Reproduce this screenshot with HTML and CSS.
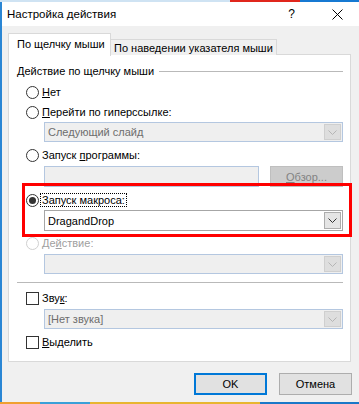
FILE: index.html
```html
<!DOCTYPE html>
<html lang="ru">
<head>
    <meta charset="UTF-8">
    <title>Настройка действия</title>
    <link rel="stylesheet" href="styles.css">
</head>
<body>
    <div class="dialog">
        <header class="titlebar">
            <span class="title">Настройка действия</span>
            <span class="help">?</span>
            <svg class="close" width="11" height="11" viewBox="0 0 11 11">
                <path d="M0.5 0.5 L10.5 10.5 M10.5 0.5 L0.5 10.5" stroke="#000" stroke-width="1"/>
            </svg>
        </header>

        <div class="dialog-body">
            <div class="tabs">
                <div class="tab tab-active">По щелчку мыши</div>
                <div class="tab">По наведении указателя мыши</div>
            </div>

            <div class="panel">
                <div class="group-title">
                    <span>Действие по щелчку мыши</span>
                    <span class="group-line"></span>
                </div>

                <label class="option gap-5"><span class="radio"></span><span><u>Н</u>ет</span></label>
                <label class="option gap-4"><span class="radio"></span><span><u>П</u>ерейти по гиперссылке:</span></label>
                <div class="select select-disabled gap-2">
                    <span class="select-text">Следующий слайд</span>
                    <span class="select-arrow"><svg width="9" height="5" viewBox="0 0 9 5"><path d="M0.5 0.5 L4.5 4.5 L8.5 0.5" fill="none" stroke="#b5b5b5"/></svg></span>
                </div>

                <label class="option gap-5"><span class="radio"></span><span>Запуск <u>п</u>рограммы:</span></label>
                <div class="program-row gap-3">
                    <div class="input-disabled"></div>
                    <button class="btn-browse" disabled><u>О</u>бзор...</button>
                </div>

                <label class="option gap-5"><span class="radio radio-checked"></span><span class="focus">Запуск макроса:</span></label>
                <div class="select gap-2">
                    <span class="select-text">DragandDrop</span>
                    <span class="select-arrow"><svg width="9" height="5" viewBox="0 0 9 5"><path d="M0.5 0.5 L4.5 4.5 L8.5 0.5" fill="none" stroke="#333"/></svg></span>
                </div>

                <label class="option option-disabled gap-4"><span class="radio"></span><span>Де<u>й</u>ствие:</span></label>
                <div class="select select-disabled gap-3">
                    <span class="select-text"></span>
                    <span class="select-arrow"><svg width="9" height="5" viewBox="0 0 9 5"><path d="M0.5 0.5 L4.5 4.5 L8.5 0.5" fill="none" stroke="#b5b5b5"/></svg></span>
                </div>

                <div class="separator"></div>

                <label class="option gap-7"><span class="checkbox"></span><span>Зву<u>к</u>:</span></label>
                <div class="select select-disabled gap-3">
                    <span class="select-text">[Нет звука]</span>
                    <span class="select-arrow"><svg width="9" height="5" viewBox="0 0 9 5"><path d="M0.5 0.5 L4.5 4.5 L8.5 0.5" fill="none" stroke="#b5b5b5"/></svg></span>
                </div>
                <label class="option gap-5"><span class="checkbox"></span><span><u>В</u>ыделить</span></label>

                <!-- рамка выделения поверх панели -->
                <div class="highlight"></div>
            </div>

            <div class="buttons">
                <button class="btn btn-default">OK</button>
                <button class="btn">Отмена</button>
            </div>
        </div>
    </div>
</body>
</html>
```

FILE: styles.css
```css
:root {
    --bg-dialog: #f0f0f0;
    --border-light: #d9d9d9;
    --text-disabled: #6d6d6d;
    --field-disabled-border: #b4c7e0;
    --accent: #0078d7;
}

* {
    margin: 0;
    padding: 0;
    box-sizing: border-box;
}

body {
    font-family: 'Liberation Sans', Arial, sans-serif;
    font-size: 11px;
    color: #000;
    width: 359px;
    height: 404px;
    overflow: hidden;
    background:
        linear-gradient(90deg, #cfe3f3 0 230px, #e0261c 230px 300px, #1679d2 300px) top / 100% 2px no-repeat,
        linear-gradient(90deg, #f0a030 0 40px, #3aa0d8 40px 90px, #e8b530 90px 260px, #1a78c8 260px) bottom / 100% 2px no-repeat,
        #2a86d4;
}

.dialog {
    margin: 2px 0 0 2px;
    width: 357px;
    height: 400px;
    background: var(--bg-dialog);
    display: flex;
    flex-direction: column;
}

.titlebar {
    height: 24px;
    background: #fff;
    display: flex;
    align-items: center;
    padding-left: 5px;
}

.title {
    flex: 1;
    font-size: 11.5px;
}

.help {
    font-size: 12px;
    margin-right: 37px;
}

.close {
    margin-right: 16px;
}

.dialog-body {
    padding: 7px 8px 0 6px;
}

.tabs {
    display: flex;
    align-items: flex-end;
    height: 22px;
    position: relative;
    z-index: 1;
}

.tab {
    height: 16px;
    padding: 0 3px 0 3px;
    border: 1px solid var(--border-light);
    border-bottom: none;
    background: var(--bg-dialog);
    display: flex;
    align-items: center;
    margin-left: -1px;
    white-space: nowrap;
}

.tab-active {
    height: 23px;
    margin-left: 0;
    margin-bottom: -1px;
    padding: 0 8px 2px 8px;
    background: #fff;
    width: 103px;
}

.panel {
    position: relative;
    height: 308px;
    border: 1px solid var(--border-light);
    background: #fff;
    margin-top: -1px;
    padding-top: 8px;
}

.group-title {
    height: 16px;
    margin: 0 7px 0 8px;
    display: flex;
    align-items: center;
    gap: 5px;
}

.group-line {
    flex: 1;
    height: 1px;
    background: #b9b9b9;
}

.option {
    height: 16px;
    padding-left: 17px;
    display: flex;
    align-items: center;
    gap: 3px;
}

.option-disabled {
    color: #a0a0a0;
}

.radio {
    width: 13px;
    height: 13px;
    border: 1px solid #333;
    border-radius: 50%;
    background: #fff;
    display: flex;
    align-items: center;
    justify-content: center;
}

.radio-checked::after {
    content: '';
    width: 7px;
    height: 7px;
    border-radius: 50%;
    background: #333;
}

.option-disabled .radio {
    border-color: #d0d0d0;
}

.checkbox {
    width: 13px;
    height: 13px;
    border: 1px solid #333;
    background: #fff;
}

.focus {
    outline: 1px dotted #000;
    outline-offset: 0;
    padding: 0 1px;
    margin-left: -1px;
}

.gap-2 { margin-top: 2px; }
.gap-3 { margin-top: 3px; }
.gap-4 { margin-top: 4px; }
.gap-5 { margin-top: 5px; }
.gap-7 { margin-top: 7px; }

.select {
    height: 21px;
    margin-left: 35px;
    margin-right: 7px;
    border: 1px solid #a6a6a6;
    background: #fff;
    display: flex;
    align-items: center;
}

.select-disabled {
    height: 20px;
    border-color: var(--field-disabled-border);
    background: #efefef;
    color: var(--text-disabled);
}

.select-text {
    flex: 1;
    padding-left: 3px;
}

.select-arrow {
    width: 17px;
    height: calc(100% - 2px);
    margin-right: 1px;
    border: 1px solid #adadad;
    background: #e5e5e5;
    display: flex;
    align-items: center;
    justify-content: center;
}

.select-disabled .select-arrow {
    border-color: #cfcfcf;
    background: #dedede;
}

.program-row {
    height: 21px;
    margin-left: 35px;
    margin-right: 7px;
    display: flex;
    gap: 11px;
}

.input-disabled {
    width: 215px;
    border: 1px solid var(--field-disabled-border);
    background: #efefef;
}

.btn-browse {
    flex: 1;
    font: inherit;
    color: #838383;
    background: #cccccc;
    border: 1px solid #bfbfbf;
}

.separator {
    height: 1px;
    margin: 8px 7px 0 8px;
    background: #b9b9b9;
}

.highlight {
    position: absolute;
    left: 13px;
    top: 128px;
    width: 330px;
    height: 54px;
    border: 3px solid #ff0000;
}

.buttons {
    margin-top: 11px;
    margin-right: -1px;
    display: flex;
    justify-content: flex-end;
    gap: 12px;
}

.btn {
    width: 73px;
    height: 22px;
    font: inherit;
    background: #e1e1e1;
    border: 1px solid #adadad;
}

.btn-default {
    border: 2px solid var(--accent);
}
```
